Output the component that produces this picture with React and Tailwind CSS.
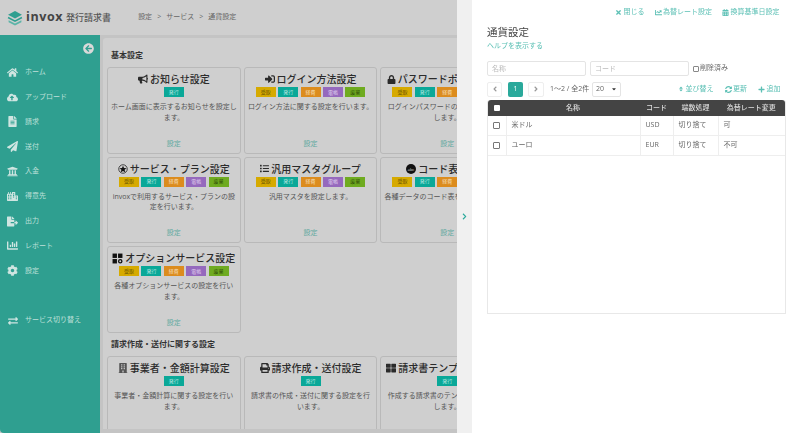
import {
  FaAngleLeft, FaAngleRight, FaArrowCircleLeft, FaBuilding, FaBullhorn, FaCalendarAlt, FaChartBar, FaChartLine, FaChevronRight,
  FaCloudUploadAlt, FaCog, FaExchangeAlt, FaFileAlt, FaFileExport, FaHome, FaList, FaLock, FaPaperPlane, FaPlus,
  FaPrint, FaSignInAlt, FaSort, FaSyncAlt, FaThLarge, FaTimes, FaUniversity, FaCity, FaCaretDown,
} from "react-icons/fa";

const font = { fontFamily: '"Open Sans", "Noto Sans CJK JP", sans-serif' };

const menu = [
  [FaHome, "ホーム"],
  [FaCloudUploadAlt, "アップロード"],
  [FaFileAlt, "請求"],
  [FaPaperPlane, "送付"],
  [FaUniversity, "入金"],
  [FaCity, "得意先"],
  [FaFileExport, "出力"],
  [FaChartBar, "レポート"],
  [FaCog, "設定"],
];

const badgeColors = {
  受取: "bg-[#d6aa00] text-[#5f4c00]",
  発行: "bg-[#0aa898] text-[#bfe8e2]",
  経費: "bg-[#dc8c1e] text-[#f5dcb5]",
  電帳: "bg-[#9569bd] text-[#e0d0ee]",
  废棄: "bg-[#6fab20] text-[#2f4d08]",
};
const all = ["受取", "発行", "経費", "電帳", "废棄"];

function StarCircle() {
  return (
    <svg viewBox="0 0 20 20" className="w-[10px] h-[10px] shrink-0">
      <circle cx="10" cy="10" r="8.5" fill="none" stroke="#222" strokeWidth="1.6" />
      <polygon points="10,3.5 12,8 17,8.4 13.2,11.6 14.4,16.5 10,13.8 5.6,16.5 6.8,11.6 3,8.4 8,8" fill="#111" />
    </svg>
  );
}

function AbcCircle() {
  return (
    <svg viewBox="0 0 20 20" className="w-[10px] h-[10px] shrink-0">
      <circle cx="10" cy="10" r="10" fill="#111" />
      <text x="10" y="13" fontSize="8" textAnchor="middle" fill="#ddd" fontFamily="Open Sans">abc</text>
    </svg>
  );
}

function OptionIcon() {
  return (
    <svg viewBox="0 0 20 20" className="w-[11px] h-[11px] shrink-0">
      <rect x="1" y="1" width="8" height="8" fill="#111" />
      <rect x="11" y="1" width="8" height="8" fill="#111" />
      <rect x="1" y="11" width="8" height="8" fill="#111" />
      <circle cx="15" cy="15" r="3" fill="none" stroke="#111" strokeWidth="2.4" />
    </svg>
  );
}

const basicCards = [
  { icon: <FaBullhorn className="text-[10px] shrink-0" />, title: "お知らせ設定", badges: ["発行"], desc: "ホーム画面に表示するお知らせを設定します。" },
  { icon: <FaSignInAlt className="text-[10px] shrink-0" />, title: "ログイン方法設定", badges: all, desc: "ログイン方法に関する設定を行います。" },
  { icon: <FaLock className="text-[9px] shrink-0" />, title: "パスワードポリシー設定", badges: all, desc: "ログインパスワードのポリシーを設定します。" },
  { icon: <StarCircle />, title: "サービス・プラン設定", badges: all, desc: "invoxで利用するサービス・プランの設定を行います。" },
  { icon: <FaList className="text-[9px] shrink-0" />, title: "汎用マスタグループ", badges: all, desc: "汎用マスタを設定します。" },
  { icon: <AbcCircle />, title: "コード表示設定", badges: all, desc: "各種データのコード表を確認できます。" },
  { icon: <OptionIcon />, title: "オプションサービス設定", badges: all, desc: "各種オプションサービスの設定を行います。" },
];

const invoiceCards = [
  { icon: <FaBuilding className="text-[10px] shrink-0 text-[#555]" />, title: "事業者・金額計算設定", badges: ["発行"], desc: "事業者・金額計算に関する設定を行います。" },
  { icon: <FaPrint className="text-[10px] shrink-0" />, title: "請求作成・送付設定", badges: ["発行"], desc: "請求書の作成・送付に関する設定を行います。" },
  { icon: <FaThLarge className="text-[10px] shrink-0" />, title: "請求書テンプレート設定", badges: ["発行"], desc: "作成する請求書のテンプレートを設定します。" },
];

function Card({ icon, title, badges, desc, link = true }) {
  return (
    <div className="h-[86.7px] flex flex-col items-center border border-[#b9b9b9] rounded-[3px] px-[3px] pt-[4px] pb-[4px] bg-[#cfcfcf]">
      <div className="flex items-center gap-[2px] whitespace-nowrap text-[10px] leading-[14px] font-medium text-[#2b2b2b]">
        {icon}
        <span>{title}</span>
      </div>
      <div className="flex gap-[2.4px] mt-[1px]">
        {badges.map((b) => (
          <span key={b} className={`w-[20px] h-[10px] flex items-center justify-center text-[5px] leading-none ${badgeColors[b]}`}>
            {b}
          </span>
        ))}
      </div>
      <p className="text-[7px] leading-[10.5px] text-[#555] text-center mt-[5px] w-full">{desc}</p>
      {link && <span className="mt-auto text-[7px] leading-[10px] text-[#5fa9a0]">設定</span>}
    </div>
  );
}

function Sidebar() {
  return (
    <aside className="w-[100px] shrink-0 bg-[#2f9f90] rounded-bl-[4px] pt-[8px] text-[#bfe0da]">
      <div className="flex justify-end pr-[6px] h-[12px] mb-[5px]">
        <FaArrowCircleLeft className="text-[11px] text-[#d9d9d9]" />
      </div>
      {menu.map(([Icon, label]) => (
        <div key={label} className="h-[24.8px] flex items-center text-[7px]">
          <span className="w-[25px] flex justify-center shrink-0">
            <Icon className="text-[11px] text-[#cfe5e1]" />
          </span>
          <span>{label}</span>
        </div>
      ))}
      <div className="h-[24.8px] mt-[25px] flex items-center text-[7px]">
        <span className="w-[25px] flex justify-center shrink-0">
          <FaExchangeAlt className="text-[10px] text-[#cfe5e1]" />
        </span>
        <span>サービス切り替え</span>
      </div>
    </aside>
  );
}

function Header() {
  return (
    <header className="h-[35px] shrink-0 flex items-center bg-[#cfcfcf] pl-[7px]">
      <svg viewBox="0 0 30 30" className="w-[16px] h-[16px] shrink-0">
        <polygon points="15,2 28,9 15,16 2,9" fill="#2f9f90" />
        <polyline points="2,14 15,21 28,14" fill="none" stroke="#2f9f90" strokeWidth="3" />
        <polygon points="3,19 15,25.5 27,19 27,23 15,29 3,23" fill="#5cb4a8" />
      </svg>
      <span className="ml-[3px] text-[12.5px] font-bold tracking-[0.6px] text-[#444] leading-none">invox</span>
      <span className="ml-[3px] text-[9px] font-medium text-[#555] leading-none">発行請求書</span>
      <nav className="ml-[27px] flex items-center text-[7px] text-[#666]">
        <span>設定</span>
        <span className="mx-[5px]">&gt;</span>
        <span>サービス</span>
        <span className="mx-[5px]">&gt;</span>
        <span>通貨設定</span>
      </nav>
    </header>
  );
}

function TopLink({ icon, children }) {
  return (
    <span className="flex items-center gap-[1.5px] text-[#5cc0b5]">
      {icon}
      {children}
    </span>
  );
}

const rows = [
  ["米ドル", "USD", "切り捨て", "可"],
  ["ユーロ", "EUR", "切り捨て", "不可"],
];

function Panel() {
  return (
    <div className="absolute top-0 bottom-0 left-[456.5px] right-0 flex bg-[#f0f0f0]">
      <div className="w-[15px] shrink-0 flex items-center justify-center">
        <FaChevronRight className="text-[7px] text-[#2aa99b]" />
      </div>
      <div className="flex-1 bg-white pl-[15.5px] pr-[15px] text-[7px] text-[#666] blur-[0.25px]">
        <div className="h-[25px] flex items-center justify-end gap-[10px] pr-[6px]">
          <TopLink icon={<FaTimes className="text-[7px]" />}>閉じる</TopLink>
          <TopLink icon={<FaChartLine className="text-[7px]" />}>為替レート設定</TopLink>
          <TopLink icon={<FaCalendarAlt className="text-[7px]" />}>換算基準日設定</TopLink>
        </div>
        <h1 className="text-[10.5px] leading-[14px] text-[#444]">通貨設定</h1>
        <div className="text-[7px] leading-[10px] mt-[2px] text-[#5cc0b5]">ヘルプを表示する</div>
        <div className="flex items-center gap-[4px] mt-[10px] h-[15px]">
          <input placeholder="名称" className="w-[99px] h-[15px] border border-[#e4e4e4] rounded-[2px] px-[4px] text-[7px] placeholder:text-[#bbb] outline-none" />
          <input placeholder="コード" className="w-[99px] h-[15px] border border-[#e4e4e4] rounded-[2px] px-[4px] text-[7px] placeholder:text-[#bbb] outline-none" />
          <label className="flex items-center gap-[1px] text-[#666]">
            <span className="w-[6px] h-[6px] border border-[#888] rounded-[1px] bg-white" />
            削除済み
          </label>
        </div>
        <div className="flex items-center h-[15px] mt-[5.5px]">
          <span className="w-[15px] h-[15px] border border-[#eee] rounded-[2px] flex items-center justify-center mr-[6px]">
            <FaAngleLeft className="text-[8px] text-[#999]" />
          </span>
          <span className="w-[15px] h-[15px] bg-[#2aa99b] rounded-[2px] text-white flex items-center justify-center mr-[5px]">1</span>
          <span className="w-[16px] h-[15px] border border-[#eee] rounded-[2px] flex items-center justify-center mr-[6px]">
            <FaAngleRight className="text-[8px] text-[#999]" />
          </span>
          <span className="w-[42px] whitespace-nowrap">1〜2 / 全2件</span>
          <span className="w-[29px] h-[15px] border border-[#e4e4e4] rounded-[2px] flex items-center justify-between px-[3px]">
            20
            <FaCaretDown className="text-[6px] text-[#333]" />
          </span>
          <div className="ml-auto flex items-center gap-[11px] pr-[5px]">
            <TopLink icon={<FaSort className="text-[6px]" />}>並び替え</TopLink>
            <TopLink icon={<FaSyncAlt className="text-[7px]" />}>更新</TopLink>
            <TopLink icon={<FaPlus className="text-[7px]" />}>追加</TopLink>
          </div>
        </div>
        <div className="mt-[3.5px] w-[298.5px] h-[214px] border border-[#e8e8e8] border-t-0 rounded-t-[3px]">
          <table className="w-full table-fixed border-collapse">
            <colgroup>
              <col className="w-[18px]" />
              <col className="w-[134px]" />
              <col className="w-[33px]" />
              <col className="w-[45px]" />
              <col />
            </colgroup>
            <thead>
              <tr className="h-[15.5px] bg-[#444] text-[#ddd] text-[7px] font-medium">
                <th className="rounded-tl-[3px] font-medium">
                  <span className="block w-[6px] h-[6px] mx-auto bg-white rounded-[1px]" />
                </th>
                <th className="font-medium">名称</th>
                <th className="font-medium">コード</th>
                <th className="font-medium">端数処理</th>
                <th className="rounded-tr-[3px] font-medium">為替レート変更</th>
              </tr>
            </thead>
            <tbody>
              {rows.map((r) => (
                <tr key={r[1]} className="h-[20px] border-b border-[#eee]">
                  <td className="border-r border-[#eee]">
                    <span className="block w-[7px] h-[7px] mx-auto border border-[#777] rounded-[1px]" />
                  </td>
                  <td className="border-r border-[#eee] pl-[5px]">{r[0]}</td>
                  <td className="border-r border-[#eee] pl-[5px]">{r[1]}</td>
                  <td className="border-r border-[#eee] pl-[5px]">{r[2]}</td>
                  <td className="pl-[5px]">{r[3]}</td>
                </tr>
              ))}
            </tbody>
          </table>
        </div>
      </div>
    </div>
  );
}

export default function App() {
  return (
    <div className="relative w-[800px] h-[433px] overflow-hidden bg-[#c4c4c4]" style={font}>
      <div className="h-full flex flex-col">
        <Header />
        <div className="flex-1 min-h-0 flex">
          <Sidebar />
          <main className="flex-1 min-w-0 ml-[3px] mt-[3px] mb-[4px] bg-[#cfcfcf] overflow-hidden rounded-tl-[3px] px-[4px]">
            <h2 className="text-[8px] leading-[12px] font-bold text-[#333] mt-[11px] mb-[6px] pl-[4px]">基本設定</h2>
            <div className="grid grid-cols-[133.7px_133.7px_133.7px] gap-[3px]">
              {basicCards.map((c) => (
                <Card key={c.title} {...c} />
              ))}
            </div>
            <h2 className="text-[8px] leading-[12px] font-bold text-[#333] mt-[5px] mb-[6px] pl-[4px]">請求作成・送付に関する設定</h2>
            <div className="grid grid-cols-[133.7px_133.7px_133.7px] gap-[3px]">
              {invoiceCards.map((c) => (
                <Card key={c.title} {...c} link={false} />
              ))}
            </div>
          </main>
        </div>
      </div>
      <div className="absolute inset-0 backdrop-blur-[0.35px]" />
      <Panel />
    </div>
  );
}
